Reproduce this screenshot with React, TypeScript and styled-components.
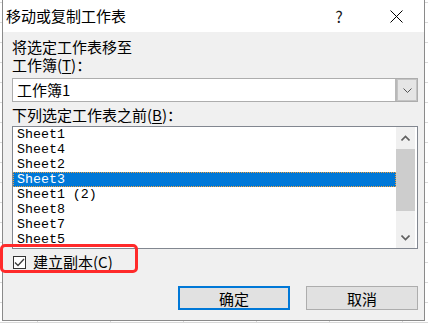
import React from "react";
import styled, { createGlobalStyle } from "styled-components";

const GlobalStyle = createGlobalStyle`
  html, body {
    margin: 0;
    padding: 0;
    background: #ffffff;
  }
  * {
    box-sizing: border-box;
  }
`;

const UI_FONT = `"Noto Sans CJK SC", "Noto Sans", sans-serif`;

const Page = styled.div`
  position: relative;
  width: 428px;
  height: 323px;
  overflow: hidden;
  background-color: #ffffff;
  background-image: linear-gradient(to right, #d8d8d8 1px, transparent 1px),
    linear-gradient(to bottom, #d8d8d8 1px, transparent 1px);
  background-size: 73px 20px;
  background-position: 37px 2px;
  font-family: ${UI_FONT};
`;

const Dialog = styled.div`
  margin-left: 2px;
  width: 423px;
  height: 321px;
  display: flex;
  flex-direction: column;
  border: 1px solid #8a8a8a;
  border-top: none;
  background: #f0f0f0;
`;

const TitleBar = styled.div`
  height: 32px;
  display: flex;
  align-items: center;
  background: #ffffff;
  padding: 0 5px 0 3px;
`;

const Title = styled.div`
  flex: 1;
  font-size: 15px;
  line-height: 32px;
  color: #000;
  letter-spacing: 0px;
`;

const CaptionButton = styled.div<{ $gap?: number }>`
  width: 46px;
  height: 32px;
  display: flex;
  align-items: center;
  justify-content: center;
  margin-left: ${(p) => p.$gap ?? 0}px;
  font-size: 16px;
  color: #1a1a1a;
`;

const Body = styled.div`
  flex: 1;
  display: flex;
  flex-direction: column;
  padding: 6px 6px 0 9px;
`;

const Label = styled.div<{ $top?: number }>`
  font-size: 15px;
  line-height: 18px;
  height: 18px;
  color: #000;
  margin-top: ${(p) => p.$top ?? 0}px;
  white-space: nowrap;
  u {
    text-decoration: underline;
    text-underline-offset: 2px;
  }
`;

const Combo = styled.div`
  margin-top: 4px;
  height: 24px;
  display: flex;
  border: 1px solid #adadad;
  background: #ffffff;
`;

const ComboText = styled.div`
  flex: 1;
  font-size: 15px;
  line-height: 22px;
  padding-left: 4px;
  color: #000;
`;

const ComboButton = styled.div`
  width: 22px;
  display: flex;
  align-items: center;
  justify-content: center;
  background: #e5e5e5;
  border-left: 2px solid #b9b9b9;
  box-shadow: inset 0 0 0 1px #c4c4c4;
`;

const ListBox = styled.div`
  margin-top: 2px;
  height: 123px;
  display: flex;
  border: 1px solid #828790;
  background: #ffffff;
  overflow: hidden;
`;

const Items = styled.div`
  flex: 1;
  padding-top: 0px;
  overflow: hidden;
`;

const Item = styled.div<{ $selected?: boolean }>`
  height: 15px;
  line-height: 15px;
  padding-left: 4px;
  font-family: "Liberation Mono", "Noto Sans CJK SC", monospace;
  font-size: 13.3px;
  white-space: pre;
  color: ${(p) => (p.$selected ? "#ffffff" : "#000000")};
  background: ${(p) => (p.$selected ? "#0078d7" : "transparent")};
  outline: ${(p) => (p.$selected ? "1px dotted #f2a13c" : "none")};
  outline-offset: -1px;
`;

const ScrollBar = styled.div`
  width: 19px;
  margin-right: 2px;
  display: flex;
  flex-direction: column;
  background: #f0f0f0;
`;

const ScrollArrow = styled.div`
  height: 21px;
  display: flex;
  align-items: center;
  justify-content: center;
`;

const ScrollTrack = styled.div`
  flex: 1;
  display: flex;
  flex-direction: column;
`;

const Thumb = styled.div`
  margin-top: 1px;
  height: 62px;
  background: #cdcdcd;
`;

const CheckRow = styled.div`
  margin-top: 3px;
  height: 20px;
  display: flex;
  align-items: center;
  padding-left: 1px;
  gap: 7px;
`;

const CheckBox = styled.div`
  width: 13px;
  height: 13px;
  border: 1px solid #333333;
  background: #ffffff;
  display: flex;
  align-items: center;
  justify-content: center;
`;

const CheckLabel = styled.div`
  font-size: 15px;
  line-height: 20px;
  color: #000;
`;

const ButtonRow = styled.div`
  margin-top: 14px;
  display: flex;
  justify-content: flex-end;
  gap: 16px;
`;

const Button = styled.div<{ $default?: boolean }>`
  width: 112px;
  height: 24px;
  display: flex;
  align-items: center;
  justify-content: center;
  font-size: 15px;
  color: #000;
  background: #e1e1e1;
  border: ${(p) => (p.$default ? "2px solid #0078d7" : "1px solid #adadad")};
`;

const Annotation = styled.div`
  position: absolute;
  left: 0px;
  top: 244px;
  width: 138px;
  height: 29px;
  border: 3px solid #ff2a2a;
  border-radius: 5px;
  pointer-events: none;
`;

const Chevron = ({ up }: { up?: boolean }) => (
  <svg width="9" height="6" viewBox="0 0 9 6">
    <path
      d={up ? "M0.5 5.5 L4.5 1.5 L8.5 5.5" : "M0.5 0.5 L4.5 4.5 L8.5 0.5"}
      fill="none"
      stroke="#606060"
      strokeWidth="1.6"
    />
  </svg>
);

const sheets = [
  "Sheet1",
  "Sheet4",
  "Sheet2",
  "Sheet3",
  "Sheet1 (2)",
  "Sheet8",
  "Sheet7",
  "Sheet5",
  "Sheet6",
];

const App = () => {
  return (
    <Page>
      <GlobalStyle />
      <Dialog>
        <TitleBar>
          <Title>移动或复制工作表</Title>
          <CaptionButton>?</CaptionButton>
          <CaptionButton $gap={11}>
            <svg width="13" height="13" viewBox="0 0 13 13">
              <path d="M0.5 0.5 L12.5 12.5 M12.5 0.5 L0.5 12.5" stroke="#000" strokeWidth="1" />
            </svg>
          </CaptionButton>
        </TitleBar>
        <Body>
          <Label>将选定工作表移至</Label>
          <Label>
            工作簿(<u>T</u>)：
          </Label>
          <Combo>
            <ComboText>工作簿1</ComboText>
            <ComboButton>
              <svg width="9" height="5" viewBox="0 0 9 5">
                <path d="M0.5 0.5 L4.5 4.5 L8.5 0.5" fill="none" stroke="#555" strokeWidth="1" />
              </svg>
            </ComboButton>
          </Combo>
          <Label $top={4}>
            下列选定工作表之前(<u>B</u>)：
          </Label>
          <ListBox>
            <Items>
              {sheets.map((s, i) => (
                <Item key={i} $selected={s === "Sheet3"}>
                  {s}
                </Item>
              ))}
            </Items>
            <ScrollBar>
              <ScrollArrow>
                <Chevron up />
              </ScrollArrow>
              <ScrollTrack>
                <Thumb />
              </ScrollTrack>
              <ScrollArrow>
                <Chevron />
              </ScrollArrow>
            </ScrollBar>
          </ListBox>
          <CheckRow>
            <CheckBox>
              <svg width="11" height="9" viewBox="0 0 11 9">
                <path d="M1 4.5 L4 7.5 L10 1" fill="none" stroke="#3c3c3c" strokeWidth="1.3" />
              </svg>
            </CheckBox>
            <CheckLabel>建立副本(C)</CheckLabel>
          </CheckRow>
          <ButtonRow>
            <Button $default>确定</Button>
            <Button>取消</Button>
          </ButtonRow>
        </Body>
      </Dialog>
      <Annotation />
    </Page>
  );
};

export default App;
